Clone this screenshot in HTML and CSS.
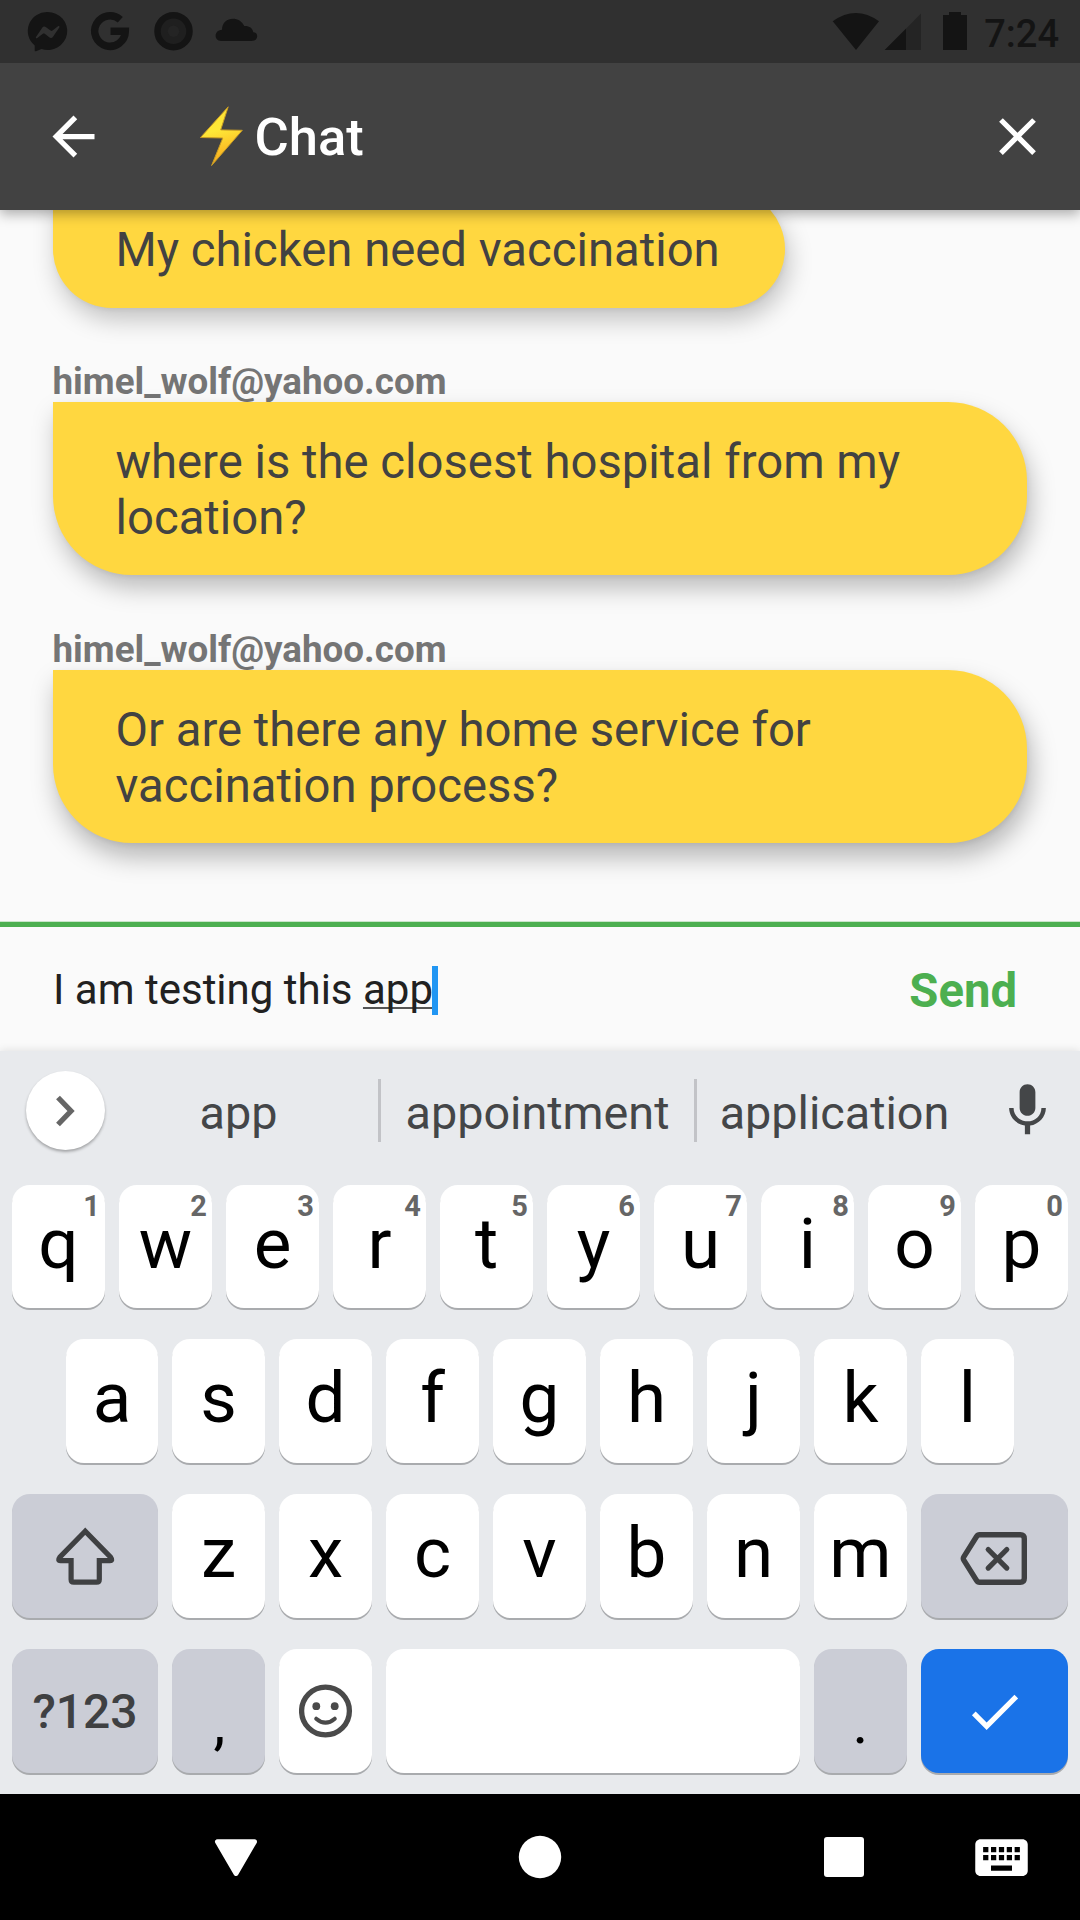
FILE: index.html
```html
<!DOCTYPE html>
<html lang="en">
<head>
<meta charset="utf-8">
<title>Chat</title>
<link rel="stylesheet" href="styles.css">
</head>
<body>
<div class="screen">
  <div class="status-bar">
    <svg class="status-left" width="240" height="63" viewBox="24 0 240 63">
      <path fill="#141414" d="M47.500 12a19.500 19 0 1 1-6 37l-5.500 2.200c-.8.300-1.300 0-1.300-.8v-4.800A19.200 19 0 0 1 47.500 12z"/>
      <path fill="#303030" d="M36 37l6.200-9.300c1-1.500 2.600-1.500 3.800-.5l4.600 3.300c.7.500 1.200.5 1.900 0l5.500-4.300c.9-.7 1.900.2 1.300 1.200l-6.300 9.300c-1 1.500-2.600 1.500-3.800.5l-4.400-3.400c-.7-.5-1.300-.5-2 0l-5.500 4.300c-.9.700-1.900-.1-1.300-1.100z"/>
      <path fill="none" stroke="#141414" stroke-width="7.500" d="M120.300 19.700A15.300 15.300 0 1 0 125.300 31.200H110.500"/>
      <circle cx="173.500" cy="31.200" r="16" fill="#1f1f1f" stroke="#141414" stroke-width="6.500"/>
      <circle cx="173.500" cy="31.200" r="5.700" fill="#242424"/>
      <path fill="#141414" d="M221 41h30.500c7.300 0 7.300-8.800 1.800-8.800-.7-4.300-4.300-6.500-9-6.200-4.500-10.700-22.300-10-22.300 3.800-8.500.5-8.200 11.200-1 11.200z"/>
    </svg>
    <div class="status-right">
      <svg width="136" height="63" viewBox="832 0 136 63">
        <path fill="#141414" d="M832.700 21.300Q855.800 4.800 879 21.300L856 50z"/>
        <path fill="#242424" d="M921 13.500V50h-36z"/>
        <path fill="#141414" d="M906 28.700V50h-21.300z"/>
        <path fill="#141414" d="M949 12h12v3h6v35h-24V15h6z"/>
      </svg>
      <span class="clock">7:24</span>
    </div>
  </div>

  <header class="app-bar">
    <svg class="icon" viewBox="0 0 24 24"><path fill="#fff" d="M20 11H7.830l5.590-5.590L12 4l-8 8 8 8 1.410-1.410L7.830 13H20v-2z"/></svg>
    <div class="title">
      <svg width="43" height="61" viewBox="0 0 43 61">
        <defs><linearGradient id="bolt" x1="0.300" y1="0" x2="0.500" y2="1">
          <stop offset="0" stop-color="#fee233"/><stop offset="0.400" stop-color="#fee837"/><stop offset="0.750" stop-color="#fcbf26"/><stop offset="1" stop-color="#f0a81f"/>
        </linearGradient></defs>
        <path d="M28.200.800L.500 31.500l22.300.5L11.600 59.500 42.300 24.300l-21.600-.4z" fill="url(#bolt)" stroke="#c79b25" stroke-width="1" stroke-linejoin="round"/>
      </svg>
      <h1 class="title-text">Chat</h1>
    </div>
    <svg class="icon" viewBox="0 0 24 24"><path fill="#fff" d="M19 6.410L17.590 5 12 10.590 6.410 5 5 6.410 10.590 12 5 17.590 6.410 19 12 13.410 17.590 19 19 17.590 13.410 12z"/></svg>
  </header>

  <main class="messages">
    <div class="message">
      <div class="bubble shade-low">My chicken need vaccination</div>
    </div>
    <div class="message">
      <div class="sender">himel_wolf@yahoo.com</div>
      <div class="bubble shade-mid">where is the closest hospital from my location?</div>
    </div>
    <div class="message">
      <div class="sender">himel_wolf@yahoo.com</div>
      <div class="bubble shade-high">Or are there any home service for vaccination process?</div>
    </div>
  </main>

  <div class="composer">
    <div class="draft"><span class="draft-text">I am testing this <span class="composing">app</span></span><span class="caret"></span></div>
    <div class="send">Send</div>
  </div>

  <section class="keyboard">
    <div class="suggestions">
      <div class="expand"><svg width="24" height="36" viewBox="0 0 24 36"><path d="M4 4.500L17 18 4 31.500" fill="none" stroke="#666" stroke-width="5.300"/></svg></div>
      <span class="suggestion first">app</span>
      <i class="divider"></i>
      <span class="suggestion middle">appointment</span>
      <i class="divider"></i>
      <span class="suggestion last">application</span>
      <svg class="icon mic" viewBox="0 0 24 24"><path fill="#444648" d="M12 14c1.660 0 3-1.340 3-3V5c0-1.660-1.340-3-3-3S9 3.340 9 5v6c0 1.660 1.340 3 3 3zm5.300-3c0 3-2.540 5.100-5.300 5.100S6.700 14 6.700 11H5c0 3.410 2.720 6.230 6 6.720V21h2v-3.280c3.280-.48 6-3.300 6-6.720h-1.700z"/></svg>
    </div>
    <div class="rows">
      <div class="row top">
        <div class="key">q<sup class="hint">1</sup></div><div class="key">w<sup class="hint">2</sup></div><div class="key">e<sup class="hint">3</sup></div><div class="key">r<sup class="hint">4</sup></div><div class="key">t<sup class="hint">5</sup></div><div class="key">y<sup class="hint">6</sup></div><div class="key">u<sup class="hint">7</sup></div><div class="key">i<sup class="hint">8</sup></div><div class="key">o<sup class="hint">9</sup></div><div class="key">p<sup class="hint">0</sup></div>
      </div>
      <div class="row inset">
        <div class="key">a</div><div class="key">s</div><div class="key">d</div><div class="key">f</div><div class="key">g</div><div class="key">h</div><div class="key">j</div><div class="key">k</div><div class="key">l</div>
      </div>
      <div class="row">
        <div class="key side"><svg width="62" height="60" viewBox="54 1525 62 60"><path d="M85.200 1530.300L59.800 1556.200Q57.300 1559.700 60.500 1559.700H71.100V1578.500Q71.100 1581.200 73.800 1581.200H96.600Q99.300 1581.200 99.300 1578.500V1559.700H109.900Q113.100 1559.700 110.600 1556.200Z" fill="none" stroke="#3f4042" stroke-width="5.200"/></svg></div>
        <div class="key">z</div><div class="key">x</div><div class="key">c</div><div class="key">v</div><div class="key">b</div><div class="key">n</div><div class="key">m</div>
        <div class="key side"><svg class="backspace" width="70" height="56" viewBox="960 1530 70 56"><path d="M979.500 1534.800H1020.300Q1024.300 1534.800 1024.300 1538.800V1578.200Q1024.300 1582.200 1020.300 1582.200H979.500Q977.700 1582.200 976.400 1580.200L963.800 1560.200Q962.800 1558.500 963.800 1556.800L976.400 1536.800Q977.700 1534.800 979.500 1534.800Z" fill="none" stroke="#3f4042" stroke-width="5.400"/><path d="M988.200 1549.500l18.600 18.600m0-18.600l-18.600 18.600" stroke="#3f4042" stroke-width="5.200" stroke-linecap="round"/></svg></div>
      </div>
      <div class="row">
        <div class="key side symbols">?123</div>
        <div class="key grey punct comma">,</div>
        <div class="key"><svg width="54" height="54" viewBox="-26.500 -27 54 54"><circle r="23.900" fill="none" stroke="#4a4a4a" stroke-width="5.300"/><circle cx="-9.200" cy="-4.800" r="3.900" fill="#4a4a4a"/><circle cx="9.200" cy="-4.800" r="3.900" fill="#4a4a4a"/><path d="M-9.300 7.700Q0 15.700 9.300 7.700" fill="none" stroke="#4a4a4a" stroke-width="4" stroke-linecap="round"/></svg></div>
        <div class="key space"></div>
        <div class="key grey punct">.</div>
        <div class="key side enter"><svg class="icon" viewBox="0 0 24 24"><path fill="#fff" d="M9 16.170L4.830 12l-1.420 1.410L9 19 21 7l-1.410-1.410z"/></svg></div>
      </div>
    </div>
  </section>

  <nav class="nav-bar">
    <svg width="44" height="44" viewBox="0 0 44 44"><path d="M3.500 6.700h37L22 38.500z" fill="#fff" stroke="#fff" stroke-width="5" stroke-linejoin="round"/></svg>
    <svg width="44" height="44" viewBox="0 0 44 44"><circle cx="22" cy="22" r="21.200" fill="#fff"/></svg>
    <svg width="44" height="44" viewBox="0 0 44 44"><rect x="2" y="2" width="40" height="40" rx="3" fill="#fff"/></svg>
    <svg class="ime" viewBox="0 0 24 24"><path fill="#fff" d="M20 5H4c-1.100 0-1.990.9-1.990 2L2 17c0 1.100.9 2 2 2h16c1.100 0 2-.9 2-2V7c0-1.100-.9-2-2-2zm-9 3h2v2h-2V8zm0 3h2v2h-2v-2zM8 8h2v2H8V8zm0 3h2v2H8v-2zm-1 2H5v-2h2v2zm0-3H5V8h2v2zm9 7H8v-2h8v2zm0-4h-2v-2h2v2zm0-3h-2V8h2v2zm3 3h-2v-2h2v2zm0-3h-2V8h2v2z"/></svg>
  </nav>
</div>
</body>
</html>
```
FILE: styles.css
```css
* { box-sizing: border-box; }
body { margin: 0; font-family: Roboto, "Liberation Sans", sans-serif; }
svg { display: block; flex: none; }

.screen {
  width: 1080px;
  height: 1920px;
  display: flex;
  flex-direction: column;
  overflow: hidden;
  background: #fafafa;
}
.icon { width: 63px; height: 63px; }

.status-bar {
  height: 63px;
  flex: none;
  padding: 0 21px 0 24px;
  display: flex;
  justify-content: space-between;
  background: #303030;
  z-index: 2;
}
.status-right { display: flex; gap: 16px; }
.clock {
  padding-top: 3px;
  font-size: 38px;
  font-weight: 500;
  line-height: 63px;
  color: #141414;
}

.app-bar {
  height: 147px;
  flex: none;
  padding: 0 31.500px 0 42px;
  display: flex;
  align-items: center;
  background: #424242;
  box-shadow: 0 4px 12px rgba(0, 0, 0, .32);
  z-index: 1;
}
.title {
  flex: 1;
  padding-left: 95px;
  display: flex;
  align-items: center;
  gap: 11.500px;
}
.title-text {
  margin: 0;
  font-size: 52.500px;
  font-weight: 500;
  line-height: 62px;
  color: #fff;
}

.messages {
  height: 712px;
  flex: none;
  padding: 0 53.250px 79px 52.500px;
  display: flex;
  flex-direction: column;
  justify-content: flex-end;
  gap: 52.500px;
  overflow: hidden;
}
.message { display: flex; flex-direction: column; align-items: flex-start; }
.sender {
  height: 42px;
  font-size: 36.750px;
  font-weight: 700;
  line-height: 43px;
  color: #757575;
}
.bubble {
  padding: 31.750px 65px 29.500px 63px;
  border-radius: 0 78.750px 78.750px 78.750px;
  background: #ffd740;
  font-size: 47.250px;
  line-height: 56px;
  color: #424242;
}
.shade-low { box-shadow: 4px 12px 24px rgba(0, 0, 0, .22), 1px 2px 5px rgba(0, 0, 0, .06); }
.shade-mid { box-shadow: 4px 13px 25px rgba(0, 0, 0, .25), 1px 2px 5px rgba(0, 0, 0, .06); }
.shade-high { box-shadow: 4px 14px 26px rgba(0, 0, 0, .28), 1px 2px 5px rgba(0, 0, 0, .06); }

.composer {
  height: 129px;
  flex: none;
  padding: 3px 63px 0 53px;
  display: flex;
  align-items: center;
  justify-content: space-between;
  border-top: 5px solid #4caf50;
  box-shadow: 0 -1px 0 #c9e6ca;
}
.draft {
  display: flex;
  align-items: center;
  white-space: pre;
  font-size: 42px;
  line-height: 50px;
  color: #212121;
}
.draft-text { padding-bottom: 2px; }
.composing {
  text-decoration: underline 2px #555;
  text-decoration-skip-ink: none;
  text-underline-offset: 3px;
}
.caret { width: 6px; height: 49px; margin-left: -1px; background: #2196f3; }
.send { font-size: 47.250px; font-weight: 700; line-height: 56px; color: #4caf50; }

.keyboard {
  height: 743px;
  flex: none;
  background: #e8eaed;
  box-shadow: 0 -1px 8px rgba(0, 0, 0, .1);
}
.suggestions {
  height: 134px;
  padding: 0 21px 15px 26px;
  display: flex;
  align-items: center;
}
.expand {
  width: 79px;
  height: 79px;
  border-radius: 50%;
  display: flex;
  align-items: center;
  justify-content: center;
  background: #fff;
  box-shadow: 0 2px 3px rgba(0, 0, 0, .3);
}
.suggestion {
  padding-top: 5px;
  text-align: center;
  font-size: 46.750px;
  line-height: 56px;
  color: #444648;
}
.suggestion.first { width: 267px; margin-right: 6px; }
.suggestion.middle { width: 313px; }
.suggestion.last { width: 275px; }
.mic { margin-left: auto; }
.divider { width: 3px; height: 63px; background: #c2c3c7; }

.rows { padding: 0 12px; display: flex; flex-direction: column; gap: 31px; }
.row { display: flex; gap: 14px; }
.row.inset { padding: 0 54px; }
.row.inset .key:first-child { flex: 0 0 92px; }
.key {
  flex: 0 0 93px;
  height: 124px;
  padding-bottom: 6px;
  position: relative;
  display: flex;
  align-items: center;
  justify-content: center;
  border-radius: 18px;
  background: #fff;
  box-shadow: 0 2px 0 #a9abae;
  font-size: 71px;
  line-height: 118px;
  color: #000;
}
.top .key { height: 123px; padding-bottom: 5px; }
.key svg { margin-top: 6px; }
.key .backspace { margin-top: 9px; }
.hint {
  position: absolute;
  top: 3px;
  right: 5px;
  font-size: 29px;
  font-weight: 700;
  line-height: 36px;
  color: #666;
}
.side { flex: 0 0 146px; background: #cbcdd6; }
.side:last-child { flex-basis: 147px; }
.grey { background: #cbcdd6; }
.space { flex: 0 0 414px; }
.symbols { padding: 2px 0 0; font-size: 48px; font-weight: 500; color: #3f4042; }
.punct { padding: 24px 0 0; font-size: 60px; }
.comma { padding-left: 2px; }
.enter { background: #1a73e8; }

.nav-bar {
  flex: 1;
  padding: 0 47px 0 214px;
  display: flex;
  align-items: center;
  background: #000;
  gap: 260px;
}
.ime { width: 63px; height: 63px; margin-left: -156px; }
```
